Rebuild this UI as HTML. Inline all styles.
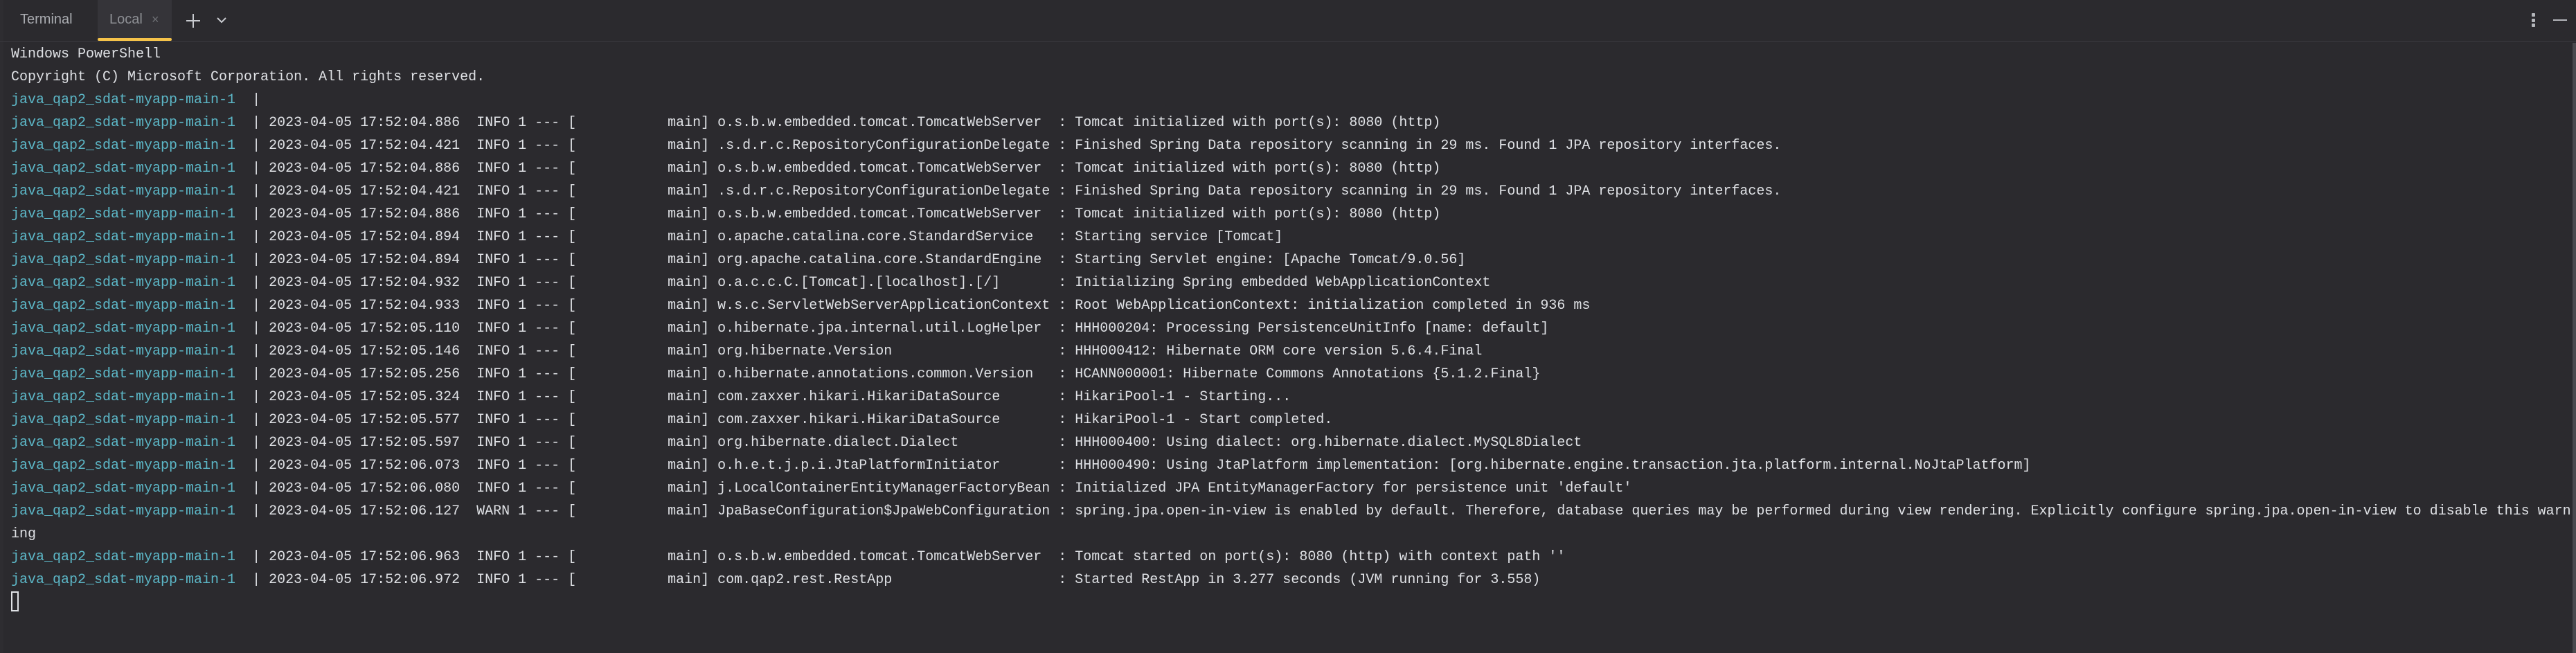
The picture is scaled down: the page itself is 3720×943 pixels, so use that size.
<!DOCTYPE html>
<html><head><meta charset="utf-8"><style>
html,body{margin:0;padding:0;width:3720px;height:943px;background:#2b2a2e;overflow:hidden;}
.tabs{position:absolute;left:0;top:0;width:3720px;height:60px;border-bottom:1px solid #3b3a3f;box-sizing:border-box;font-family:"Liberation Sans",sans-serif;font-size:20px;color:#a9abb0;}
.lstrip{position:absolute;left:0;top:0;width:5px;height:943px;background:#2e2d31;}
.t{position:absolute;top:17px;}
.loc{position:absolute;left:141px;top:0;width:107px;height:59px;background:#353439;}
.ul{position:absolute;left:141px;top:55px;width:107px;height:4px;background:#f5c34a;border-radius:2px;}
pre{position:absolute;left:16px;top:62px;margin:0;font-family:"Liberation Mono",monospace;font-size:20px;line-height:33px;color:#dfe1e5;letter-spacing:0;}
.c{color:#5cb7c7;}
.dot{position:absolute;left:3656px;width:5px;height:5px;background:#b4b6bb;border-radius:1px;}
.sb{position:absolute;left:3715px;top:62px;width:5px;height:881px;background:#4a494e;}
.cur{position:absolute;left:16px;top:854px;width:11px;height:29px;border:2px solid #dfe1e5;box-sizing:border-box;}
</style></head><body>
<div class="lstrip"></div>
<div class="tabs">
<div class="loc"></div><div class="ul"></div>
<span class="t" style="left:29px">Terminal</span>
<span class="t" style="left:158px;color:#8d8f94">Local</span>
<span class="t" style="left:219px;color:#6e7075;font-size:18px;top:18px">×</span>
<svg style="position:absolute;left:268px;top:19px" width="22" height="22"><path d="M11 1V21M1 11H21" stroke="#c9cbd0" stroke-width="2"/></svg>
<svg style="position:absolute;left:312px;top:23px" width="16" height="12"><path d="M2 3L8 9L14 3" stroke="#c9cbd0" stroke-width="2" fill="none"/></svg>
<div class="dot" style="top:19px"></div><div class="dot" style="top:27px"></div><div class="dot" style="top:34px"></div>
<div style="position:absolute;left:3687px;top:28px;width:20px;height:2px;background:#b4b6bb"></div>
</div>
<div class="sb"></div>
<pre>Windows PowerShell
Copyright (C) Microsoft Corporation. All rights reserved.
<span class="c">java_qap2_sdat-myapp-main-1</span>  |
<span class="c">java_qap2_sdat-myapp-main-1</span>  | 2023-04-05 17:52:04.886  INFO 1 --- [           main] o.s.b.w.embedded.tomcat.TomcatWebServer  : Tomcat initialized with port(s): 8080 (http)
<span class="c">java_qap2_sdat-myapp-main-1</span>  | 2023-04-05 17:52:04.421  INFO 1 --- [           main] .s.d.r.c.RepositoryConfigurationDelegate : Finished Spring Data repository scanning in 29 ms. Found 1 JPA repository interfaces.
<span class="c">java_qap2_sdat-myapp-main-1</span>  | 2023-04-05 17:52:04.886  INFO 1 --- [           main] o.s.b.w.embedded.tomcat.TomcatWebServer  : Tomcat initialized with port(s): 8080 (http)
<span class="c">java_qap2_sdat-myapp-main-1</span>  | 2023-04-05 17:52:04.421  INFO 1 --- [           main] .s.d.r.c.RepositoryConfigurationDelegate : Finished Spring Data repository scanning in 29 ms. Found 1 JPA repository interfaces.
<span class="c">java_qap2_sdat-myapp-main-1</span>  | 2023-04-05 17:52:04.886  INFO 1 --- [           main] o.s.b.w.embedded.tomcat.TomcatWebServer  : Tomcat initialized with port(s): 8080 (http)
<span class="c">java_qap2_sdat-myapp-main-1</span>  | 2023-04-05 17:52:04.894  INFO 1 --- [           main] o.apache.catalina.core.StandardService   : Starting service [Tomcat]
<span class="c">java_qap2_sdat-myapp-main-1</span>  | 2023-04-05 17:52:04.894  INFO 1 --- [           main] org.apache.catalina.core.StandardEngine  : Starting Servlet engine: [Apache Tomcat/9.0.56]
<span class="c">java_qap2_sdat-myapp-main-1</span>  | 2023-04-05 17:52:04.932  INFO 1 --- [           main] o.a.c.c.C.[Tomcat].[localhost].[/]       : Initializing Spring embedded WebApplicationContext
<span class="c">java_qap2_sdat-myapp-main-1</span>  | 2023-04-05 17:52:04.933  INFO 1 --- [           main] w.s.c.ServletWebServerApplicationContext : Root WebApplicationContext: initialization completed in 936 ms
<span class="c">java_qap2_sdat-myapp-main-1</span>  | 2023-04-05 17:52:05.110  INFO 1 --- [           main] o.hibernate.jpa.internal.util.LogHelper  : HHH000204: Processing PersistenceUnitInfo [name: default]
<span class="c">java_qap2_sdat-myapp-main-1</span>  | 2023-04-05 17:52:05.146  INFO 1 --- [           main] org.hibernate.Version                    : HHH000412: Hibernate ORM core version 5.6.4.Final
<span class="c">java_qap2_sdat-myapp-main-1</span>  | 2023-04-05 17:52:05.256  INFO 1 --- [           main] o.hibernate.annotations.common.Version   : HCANN000001: Hibernate Commons Annotations {5.1.2.Final}
<span class="c">java_qap2_sdat-myapp-main-1</span>  | 2023-04-05 17:52:05.324  INFO 1 --- [           main] com.zaxxer.hikari.HikariDataSource       : HikariPool-1 - Starting...
<span class="c">java_qap2_sdat-myapp-main-1</span>  | 2023-04-05 17:52:05.577  INFO 1 --- [           main] com.zaxxer.hikari.HikariDataSource       : HikariPool-1 - Start completed.
<span class="c">java_qap2_sdat-myapp-main-1</span>  | 2023-04-05 17:52:05.597  INFO 1 --- [           main] org.hibernate.dialect.Dialect            : HHH000400: Using dialect: org.hibernate.dialect.MySQL8Dialect
<span class="c">java_qap2_sdat-myapp-main-1</span>  | 2023-04-05 17:52:06.073  INFO 1 --- [           main] o.h.e.t.j.p.i.JtaPlatformInitiator       : HHH000490: Using JtaPlatform implementation: [org.hibernate.engine.transaction.jta.platform.internal.NoJtaPlatform]
<span class="c">java_qap2_sdat-myapp-main-1</span>  | 2023-04-05 17:52:06.080  INFO 1 --- [           main] j.LocalContainerEntityManagerFactoryBean : Initialized JPA EntityManagerFactory for persistence unit 'default'
<span class="c">java_qap2_sdat-myapp-main-1</span>  | 2023-04-05 17:52:06.127  WARN 1 --- [           main] JpaBaseConfiguration$JpaWebConfiguration : spring.jpa.open-in-view is enabled by default. Therefore, database queries may be performed during view rendering. Explicitly configure spring.jpa.open-in-view to disable this warn
ing
<span class="c">java_qap2_sdat-myapp-main-1</span>  | 2023-04-05 17:52:06.963  INFO 1 --- [           main] o.s.b.w.embedded.tomcat.TomcatWebServer  : Tomcat started on port(s): 8080 (http) with context path ''
<span class="c">java_qap2_sdat-myapp-main-1</span>  | 2023-04-05 17:52:06.972  INFO 1 --- [           main] com.qap2.rest.RestApp                    : Started RestApp in 3.277 seconds (JVM running for 3.558)</pre>
<div class="cur"></div>
</body></html>
